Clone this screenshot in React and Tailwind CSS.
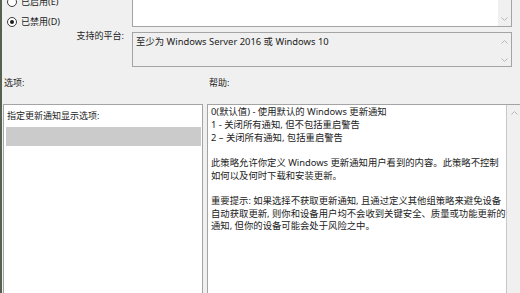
import React from "react";

function Chevron({ up }) {
  return (
    <svg width="7" height="4" viewBox="0 0 7 4" className="text-[#b8b8b8]">
      <polyline
        points={up ? "0.5,3.5 3.5,0.5 6.5,3.5" : "0.5,0.5 3.5,3.5 6.5,0.5"}
        fill="none"
        stroke="currentColor"
        strokeWidth="1"
      />
    </svg>
  );
}

function Radio({ label, checked }) {
  return (
    <div className="flex items-center h-[14px] gap-[4px]">
      <div className="w-[10px] h-[10px] rounded-full border border-[#3c3c3c] bg-white flex items-center justify-center">
        {checked && <div className="w-[4px] h-[4px] rounded-full bg-[#1e1e1e]" />}
      </div>
      <span>{label}</span>
    </div>
  );
}

const helpLines = [
  "0(默认值) - 使用默认的 Windows 更新通知",
  "1 - 关闭所有通知, 但不包括重启警告",
  "2 – 关闭所有通知, 包括重启警告",
  "",
  "此策略允许你定义 Windows 更新通知用户看到的内容。此策略不控制",
  "如何以及何时下载和安装更新。",
  "",
  "重要提示: 如果选择不获取更新通知, 且通过定义其他组策略来避免设备",
  "自动获取更新, 则你和设备用户均不会收到关键安全、质量或功能更新的",
  "通知, 但你的设备可能会处于风险之中。",
];

export default function App() {
  return (
    <div className="w-[520px] h-[293px] overflow-hidden bg-[#f0f0f0] flex text-[9px] leading-[12.7px] text-[#222] font-['Noto_Sans','Noto_Sans_CJK_SC',sans-serif]">
      <div className="w-[2px] shrink-0 bg-[#56614f]" />

      <div className="flex-1 flex flex-col -mt-[12px]">
        {/* state radios + comment */}
        <div className="flex h-[39px]">
          <div className="w-[130px] pl-[5px] pt-[8px] flex flex-col gap-[7px]">
            <Radio label="已启用(E)" />
            <Radio label="已禁用(D)" checked />
          </div>
          <div className="w-[380px] border border-[#a4a4a4] bg-white flex justify-end">
            <div className="w-[13px] bg-[#f0f0f0] flex flex-col items-center justify-end pb-[5px]">
              <Chevron />
            </div>
          </div>
        </div>

        {/* supported platforms */}
        <div className="flex mt-[5px]">
          <div className="w-[130px] pr-[8px] text-right -mt-[2px]">支持的平台:</div>
          <div className="w-[380px] h-[35px] border border-[#a4a4a4] flex">
            <div className="flex-1 pl-[3px] pt-[3px] whitespace-nowrap text-[9.4px]">
              至少为 Windows Server 2016 或 Windows 10
            </div>
            <div className="w-[13px] flex flex-col items-center justify-between pt-[7px] pb-[4px]">
              <Chevron up />
              <Chevron />
            </div>
          </div>
        </div>

        <div className="flex mt-[10px]">
          <div className="w-[205px] pl-[2px]">选项:</div>
          <div className="pl-[2px]">帮助:</div>
        </div>

        <div className="flex mt-[14px] gap-[4px]">
          {/* options */}
          <div className="ml-[1px] w-[200px] h-[200px] border border-[#a4a4a4] bg-white flex flex-col">
            <div className="pl-[3px] pt-[5px]">指定更新通知显示选项:</div>
            <div className="mt-[5px] ml-[2px] mr-[1px] h-[19px] bg-[#cbcbcb]" />
          </div>

          {/* help */}
          <div className="flex-1 h-[200px] border-l border-t border-[#a4a4a4] flex">
            <div className="flex-1 bg-white pl-[3px] pt-[1.5px] border-r border-[#c8c8c8] text-[9.35px]">
              {helpLines.map((line, i) => (
                <div key={i} className="h-[12.7px] whitespace-nowrap">
                  {line}
                </div>
              ))}
            </div>
            <div className="w-[15px] flex justify-center pt-[6px]">
              <Chevron up />
            </div>
          </div>
        </div>
      </div>

      <div className="w-[2px] shrink-0 bg-[#56614f]" />
    </div>
  );
}
